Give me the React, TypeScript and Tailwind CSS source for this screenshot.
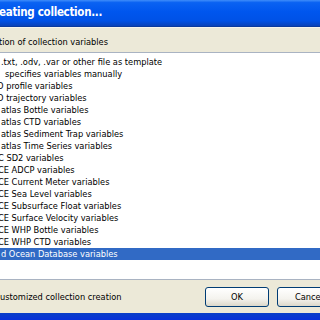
const rows = [
  { t: '.txt, .odv, .var or other file as template', c: 'pl-[1px]' },
  { t: 'specifies variables manually', c: 'pl-[5px]' },
  { t: 'O profile variables', c: '-ml-[3px]' },
  { t: 'O trajectory variables', c: '-ml-[3px]' },
  { t: 'atlas Bottle variables', c: 'pl-[1px]' },
  { t: 'atlas CTD variables', c: 'pl-[1px]' },
  { t: 'atlas Sediment Trap variables', c: 'pl-[1px]' },
  { t: 'atlas Time Series variables', c: 'pl-[1px]' },
  { t: 'C SD2 variables', c: '-ml-[2px]' },
  { t: 'CE ADCP variables', c: '-ml-[2px]' },
  { t: 'CE Current Meter variables', c: '-ml-[2px]' },
  { t: 'CE Sea Level variables', c: '-ml-[2px]' },
  { t: 'CE Subsurface Float variables', c: '-ml-[2px]' },
  { t: 'CE Surface Velocity variables', c: '-ml-[2px]' },
  { t: 'CE WHP Bottle variables', c: '-ml-[2px]' },
  { t: 'CE WHP CTD variables', c: '-ml-[2px]' },
  { t: 'd Ocean Database variables', c: 'pl-[1px]', sel: true },
]

function XpButton({ label }: { label: string }) {
  return (
    <div className="w-[64px] h-[20px] shrink-0 rounded-[3px] border border-[#003C74] bg-[linear-gradient(to_bottom,#FFFFFF_0%,#F4F3EE_60%,#DCD8CA_100%)] flex items-center justify-center text-black">
      {label}
    </div>
  )
}

export default function App() {
  return (
    <div className="w-[320px] h-[320px] overflow-hidden flex flex-col bg-[#ECE9D8] font-['DejaVu_Sans_Condensed','DejaVu_Sans',sans-serif] font-stretch-condensed text-[9.2px] text-black leading-none">
      {/* title bar */}
      <div className="h-[27px] shrink-0 flex items-center bg-[linear-gradient(to_bottom,#3F8DFA_0%,#0A62F2_10%,#0056EE_45%,#0051E6_80%,#0A42B8_100%)] border-b border-[#0A3A9E]">
        <span className="-ml-[1px] text-white font-bold text-[11.5px] tracking-[-0.3px]">eating collection...</span>
      </div>
      {/* label */}
      <div className="h-[25px] shrink-0 flex items-center pt-[3px] border-t border-[#F6F4EC]">
        <span className="-ml-[1px]">tion of collection variables</span>
      </div>
      {/* list */}
      <div className="h-[228px] shrink-0 bg-white border-y border-[#A9B3C2] pt-[3px] flex flex-col">
        {rows.map((r) => (
          <div key={r.t} className={`h-[12px] flex items-center whitespace-nowrap ${r.sel ? 'bg-[#316AC5] text-white' : ''}`}>
            <span className={r.c}>{r.t}</span>
          </div>
        ))}
      </div>
      {/* bottom */}
      <div className="h-[33px] shrink-0 w-[341px] flex items-center">
        <span className="whitespace-nowrap">ustomized collection creation</span>
        <div className="ml-auto flex gap-[8px]">
          <XpButton label="OK" />
          <XpButton label="Cancel" />
        </div>
      </div>
      <div className="flex-1 bg-[linear-gradient(to_bottom,#0A3FC8,#0831D9)]" />
    </div>
  )
}
